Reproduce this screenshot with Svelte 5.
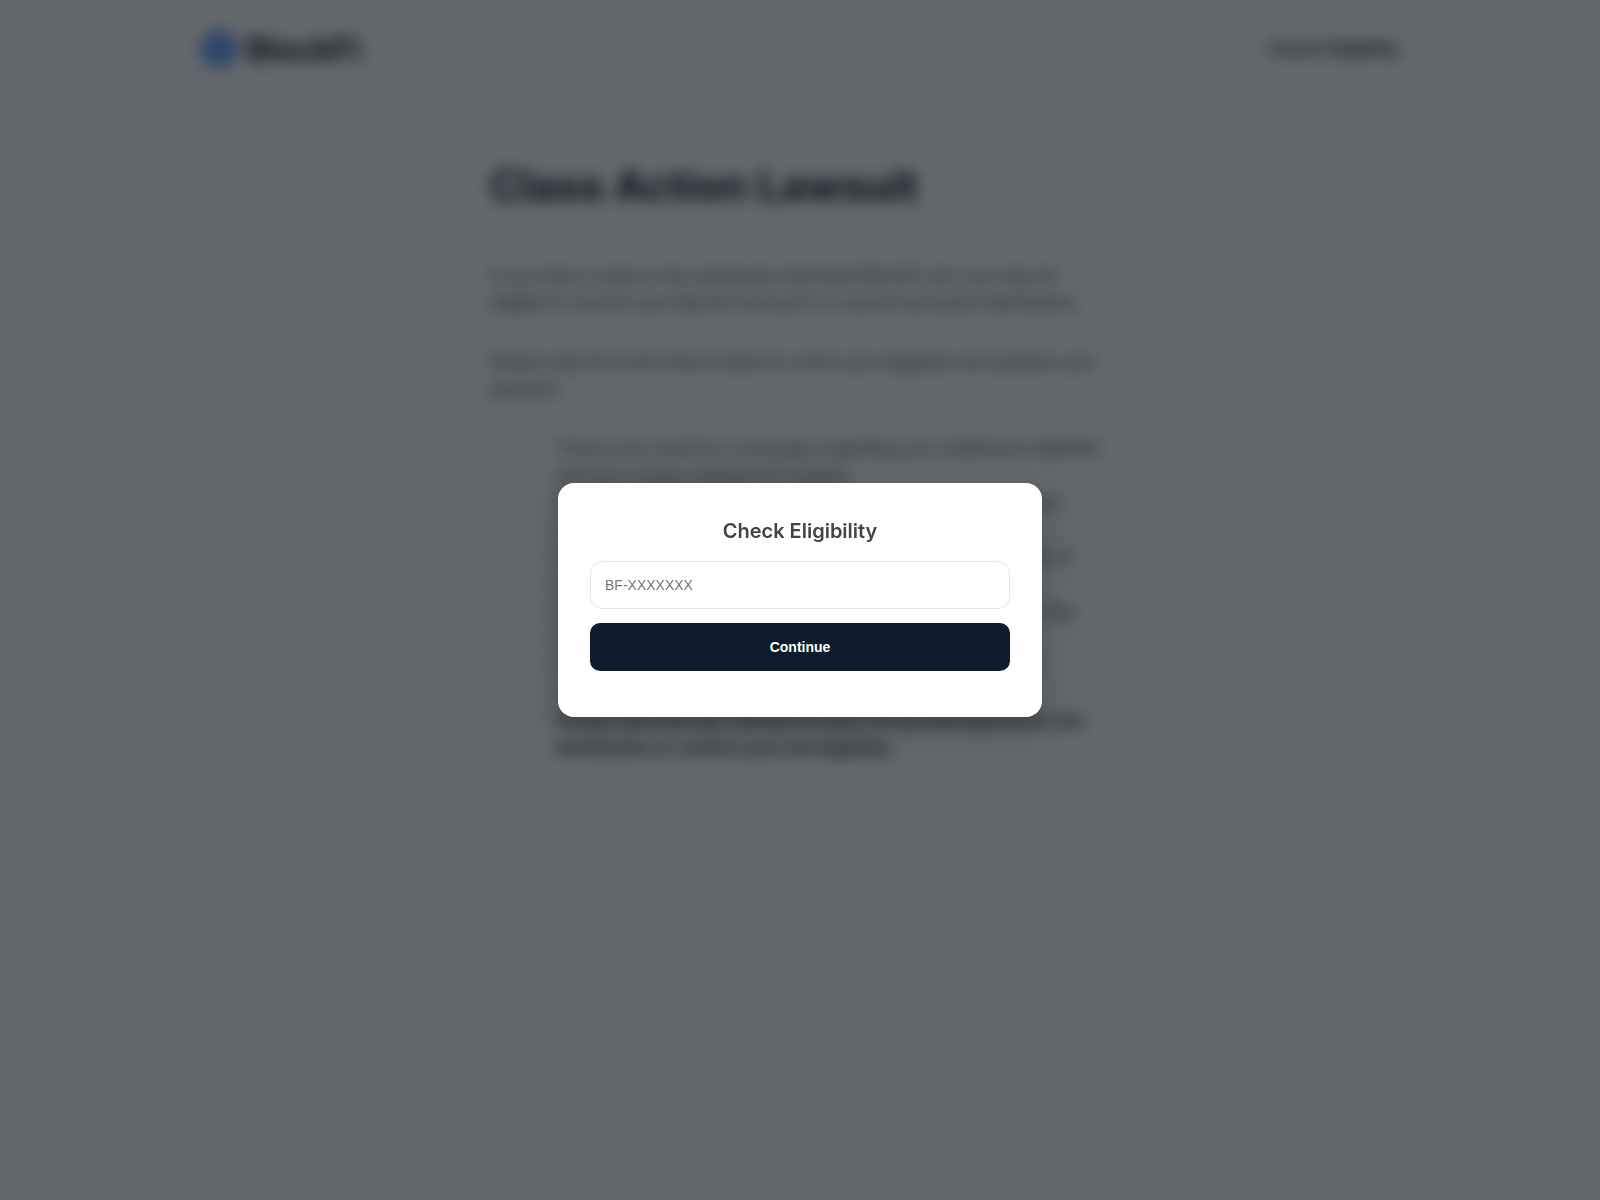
<script>
    let code = $state("");

    const items = [
        "Check your email for a message regarding your settlement eligibility and your unique claimant ID number.",
        "Enter the claimant ID exactly as it appears in the message from settlement team.",
        "Connect the wallet that was linked to your account at the time of lawsuit filing to confirm ownership.",
        "Review the balances shown for your account and make sure that they match your own records of deposits.",
        "Sign the claim form using your connected wallet, as noted in documentation on this page.",
    ];
</script>

<div class="page">
    <header class="nav">
        <div class="nav-inner">
            <div class="brand">
                <span class="brand-dot"></span>
                <span class="brand-name">BlockFi</span>
            </div>
            <span class="nav-link">Check Eligibility</span>
        </div>
    </header>

    <main class="content">
        <h1>Class Action Lawsuit</h1>
        <p>If you have a claim in the previously disclosed BlockFi suit, you may be eligible to receive your BlockFi account in a secure and quick distribution.</p>
        <p>Please read the instructions below to verify your eligibility and prepare your payment.</p>
        <ul>
            {#each items as item}
                <li>{item}</li>
            {/each}
            <li class="strong">Please note that any claimant ID does not by itself guarantee any distribution or confirm your full eligibility.</li>
        </ul>
    </main>
</div>

<div class="overlay">
    <div class="modal">
        <h2>Check Eligibility</h2>
        <input type="text" placeholder="BF-XXXXXXX" bind:value={code} />
        <button type="button">Continue</button>
    </div>
</div>

<style>
    :global(body) {
        background: #ffffff;
        font-family: Inter, "Liberation Sans", sans-serif;
    }

    .page {
        min-height: 1200px;
    }

    .nav {
        height: 98px;
        box-shadow: 0 2px 12px rgba(0, 0, 0, 0.08);
    }

    .nav-inner {
        width: 1200px;
        height: 100%;
        margin: 0 auto;
        display: flex;
        align-items: center;
        justify-content: space-between;
    }

    .brand {
        display: flex;
        align-items: center;
        gap: 8px;
    }

    .brand-dot {
        width: 38px;
        height: 38px;
        border-radius: 50%;
        background: #6fa0ff;
    }

    .brand-name {
        font-size: 32px;
        font-weight: 700;
        color: #111827;
    }

    .nav-link {
        font-size: 17px;
        font-weight: 600;
        color: #111827;
    }

    .content {
        width: 620px;
        margin: 0 auto;
        font-size: 17px;
        line-height: 27.2px;
        color: #374151;
    }

    h1 {
        margin: 0;
        padding: 64px 0 52.5px;
        font-size: 42px;
        line-height: 48px;
        font-weight: 700;
        color: #0f172a;
    }

    p {
        margin: 0 0 32px;
    }

    ul {
        margin: 0;
        padding: 0 0 0 66px;
        list-style: none;
    }

    .strong {
        font-weight: 600;
        color: #111827;
    }

    .overlay {
        position: fixed;
        inset: 0;
        display: flex;
        align-items: flex-start;
        justify-content: center;
        background: rgba(8, 16, 20, 0.63);
        backdrop-filter: blur(8px);
    }

    .modal {
        width: 484px;
        margin-top: 483px;
        padding: 36px 32px 46px;
        box-sizing: border-box;
        display: flex;
        flex-direction: column;
        background: #ffffff;
        border-radius: 16px;
        box-shadow: 0 10px 40px rgba(0, 0, 0, 0.2);
    }

    h2 {
        margin: 0 0 18px;
        font-size: 20px;
        line-height: 24px;
        font-weight: 600;
        text-align: center;
        color: #444444;
    }

    input {
        height: 48px;
        padding: 0 14px;
        box-sizing: border-box;
        border: 1px solid #e5e7eb;
        border-radius: 12px;
        outline: none;
        font-family: "Liberation Sans", Arial, sans-serif;
        font-size: 14px;
        color: #111827;
    }

    button {
        height: 48px;
        margin-top: 14px;
        border: none;
        border-radius: 10px;
        background: #0c1c2c;
        color: #ffffff;
        font-family: "Liberation Sans", Arial, sans-serif;
        font-size: 14px;
        font-weight: 700;
    }
</style>
